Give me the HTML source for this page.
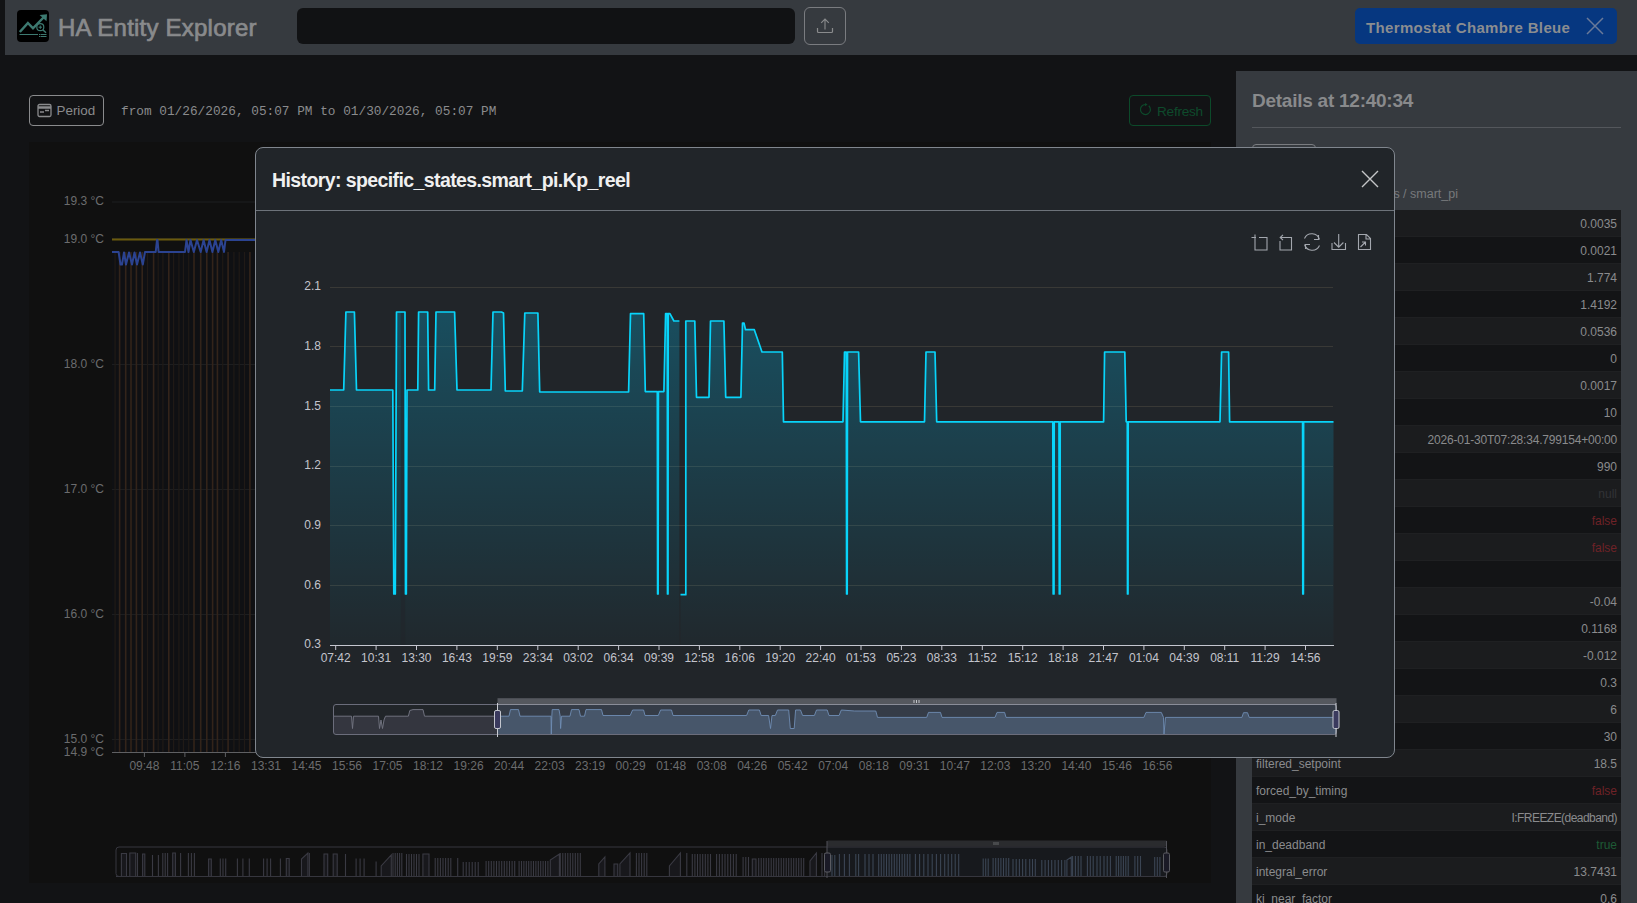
<!DOCTYPE html>
<html><head><meta charset="utf-8"><title>HA Entity Explorer</title>
<style>
*{box-sizing:border-box;margin:0;padding:0}
html,body{width:1637px;height:903px;overflow:hidden}
body{background:#121315;font-family:"Liberation Sans",sans-serif;position:relative;color:#888}
.a{position:absolute}
.t{position:absolute;white-space:nowrap;line-height:1}
</style></head><body>

<div class="a" style="left:5px;top:0;width:1632px;height:55px;background:#363a3f"></div>
<div class="a" style="left:17px;top:10px;width:32px;height:32px;background:#000;border-radius:4px"></div>
<svg class="a" style="left:17px;top:10px" width="32" height="32" viewBox="0 0 32 32">
<path d="M2.8 22 L10.9 13 L16 18.3 L26.5 7.5" stroke="#3d7a71" stroke-width="2.5" fill="none" stroke-linejoin="miter"/>
<path d="M22.6 5 L30 4.2 L29.5 11.2 Z" fill="#3d7a71"/>
<circle cx="23.3" cy="17.2" r="3.5" stroke="#3d7a71" stroke-width="1.2" fill="#000"/>
<path d="M21.6 17.2h3.4M23.3 15.5v3.4" stroke="#3d7a71" stroke-width="1"/>
<path d="M25.8 19.8 L29 22.8" stroke="#3d7a71" stroke-width="1.5"/>
<path d="M2.5 24.5h18.5M23.5 24.5h6M23.5 26.5h6" stroke="#3d7a71" stroke-width="1"/>
<path d="M22 24.5h1M22 26.5h1" stroke="#3d7a71" stroke-width="1"/>
</svg>
<div class="t" style="left:58px;top:16px;font-size:24px;letter-spacing:0.22px;-webkit-text-stroke:0.7px #898a8c;color:#898a8c">HA Entity Explorer</div>
<div class="a" style="left:297px;top:8px;width:498px;height:36px;background:#111214;border-radius:6px"></div>
<div class="a" style="left:804px;top:7px;width:42px;height:38px;border:1px solid #7a7c80;border-radius:6px"></div>
<svg class="a" style="left:804px;top:7px" width="42" height="38" viewBox="0 0 42 38">
<path d="M21 12v10.5M17.2 15.8l3.8-3.8 3.8 3.8" stroke="#8a8b8d" stroke-width="1.1" fill="none"/>
<path d="M13.5 21v3.5a1 1 0 0 0 1 1h13a1 1 0 0 0 1-1V21" stroke="#8a8b8d" stroke-width="1.2" fill="none"/>
</svg>
<div class="a" style="left:1355px;top:8px;width:262px;height:36px;background:#063780;border-radius:5px"></div>
<div class="t" style="left:1366px;top:20px;font-size:15px;font-weight:bold;letter-spacing:0.35px;color:#8b8d90">Thermostat Chambre Bleue</div>
<svg class="a" style="left:1585px;top:16px" width="20" height="20" viewBox="0 0 20 20"><path d="M2 2L18 18M18 2L2 18" stroke="#6a7a99" stroke-width="1.5"/></svg>
<div class="a" style="left:29px;top:95px;width:75px;height:31px;border:1px solid #8a8b8d;border-radius:4px"></div>
<svg class="a" style="left:37px;top:103px" width="15" height="15" viewBox="0 0 15 15">
<rect x="1" y="1.5" width="13" height="12" rx="1.5" fill="none" stroke="#8a8b8d" stroke-width="1.3"/>
<path d="M1 4.5h13" stroke="#8a8b8d" stroke-width="2.5"/><path d="M3 9h4M8 7.5h4" stroke="#8a8b8d" stroke-width="1.3"/></svg>
<div class="t" style="left:56.5px;top:104px;font-size:13.4px;color:#8a8b8d">Period</div>
<div class="t" style="left:121px;top:105.5px;font-family:'Liberation Mono',monospace;font-size:12.78px;color:#8a8b8d">from 01/26/2026, 05:07 PM to 01/30/2026, 05:07 PM</div>
<div class="a" style="left:1129px;top:95px;width:82px;height:31px;border:1px solid #0c4a2a;border-radius:4px"></div>
<svg class="a" style="left:1139px;top:103px" width="13" height="13" viewBox="0 0 13 13"><path d="M9.8 2.8A5 5 0 1 1 6.5 1.5" fill="none" stroke="#0d4a2b" stroke-width="1.2"/><path d="M6 0l2.6 1.6L6 3.3z" fill="#0d4a2b"/></svg>
<div class="t" style="left:1157px;top:105px;font-size:13.6px;letter-spacing:-0.25px;color:#0e4a2c">Refresh</div>
<div class="a" style="left:29px;top:142px;width:1182px;height:741px;background:#101010"></div>
<div class="a" style="left:1236px;top:71px;width:401px;height:832px;background:#363a3f"></div>
<div class="t" style="left:1252px;top:91px;font-size:19px;letter-spacing:-0.25px;font-weight:bold;color:#898a8c">Details at 12:40:34</div>
<div class="a" style="left:1252px;top:127px;width:369px;height:1px;background:#54575c"></div>
<div class="a" style="left:1252px;top:144px;width:64px;height:30px;border:1px solid #7a7c80;border-radius:4px"></div>
<div class="t" style="right:179px;top:187.5px;font-size:12.5px;color:#77797c">specific_states / smart_pi</div>
<div class="a" style="left:1252px;top:210px;width:369px;height:27px;background:#1b1c1e;border-bottom:1px solid #1f2022"></div>
<div class="t" style="left:1256px;top:218px;font-size:12px;color:#8a8b8d">Kd</div>
<div class="t" style="right:20px;top:218px;font-size:12px;color:#8a8b8d">0.0035</div>
<div class="a" style="left:1252px;top:237px;width:369px;height:27px;background:#131416;border-bottom:1px solid #1f2022"></div>
<div class="t" style="left:1256px;top:245px;font-size:12px;color:#8a8b8d">Ki</div>
<div class="t" style="right:20px;top:245px;font-size:12px;color:#8a8b8d">0.0021</div>
<div class="a" style="left:1252px;top:264px;width:369px;height:27px;background:#1b1c1e;border-bottom:1px solid #1f2022"></div>
<div class="t" style="left:1256px;top:272px;font-size:12px;color:#8a8b8d">Kp</div>
<div class="t" style="right:20px;top:272px;font-size:12px;color:#8a8b8d">1.774</div>
<div class="a" style="left:1252px;top:291px;width:369px;height:27px;background:#131416;border-bottom:1px solid #1f2022"></div>
<div class="t" style="left:1256px;top:299px;font-size:12px;color:#8a8b8d">Kp_reel</div>
<div class="t" style="right:20px;top:299px;font-size:12px;color:#8a8b8d">1.4192</div>
<div class="a" style="left:1252px;top:318px;width:369px;height:27px;background:#1b1c1e;border-bottom:1px solid #1f2022"></div>
<div class="t" style="left:1256px;top:326px;font-size:12px;color:#8a8b8d">u</div>
<div class="t" style="right:20px;top:326px;font-size:12px;color:#8a8b8d">0.0536</div>
<div class="a" style="left:1252px;top:345px;width:369px;height:27px;background:#131416;border-bottom:1px solid #1f2022"></div>
<div class="t" style="left:1256px;top:353px;font-size:12px;color:#8a8b8d">x</div>
<div class="t" style="right:20px;top:353px;font-size:12px;color:#8a8b8d">0</div>
<div class="a" style="left:1252px;top:372px;width:369px;height:27px;background:#1b1c1e;border-bottom:1px solid #1f2022"></div>
<div class="t" style="left:1256px;top:380px;font-size:12px;color:#8a8b8d">y</div>
<div class="t" style="right:20px;top:380px;font-size:12px;color:#8a8b8d">0.0017</div>
<div class="a" style="left:1252px;top:399px;width:369px;height:27px;background:#131416;border-bottom:1px solid #1f2022"></div>
<div class="t" style="left:1256px;top:407px;font-size:12px;color:#8a8b8d">z</div>
<div class="t" style="right:20px;top:407px;font-size:12px;color:#8a8b8d">10</div>
<div class="a" style="left:1252px;top:426px;width:369px;height:27px;background:#1b1c1e;border-bottom:1px solid #1f2022"></div>
<div class="t" style="left:1256px;top:434px;font-size:12px;color:#8a8b8d">timestamp</div>
<div class="t" style="right:20px;top:434px;font-size:12px;letter-spacing:-0.2px;color:#8a8b8d">2026-01-30T07:28:34.799154+00:00</div>
<div class="a" style="left:1252px;top:453px;width:369px;height:27px;background:#131416;border-bottom:1px solid #1f2022"></div>
<div class="t" style="left:1256px;top:461px;font-size:12px;color:#8a8b8d">count</div>
<div class="t" style="right:20px;top:461px;font-size:12px;color:#8a8b8d">990</div>
<div class="a" style="left:1252px;top:480px;width:369px;height:27px;background:#1b1c1e;border-bottom:1px solid #1f2022"></div>
<div class="t" style="left:1256px;top:488px;font-size:12px;color:#8a8b8d">a</div>
<div class="t" style="right:20px;top:488px;font-size:12px;color:#323336">null</div>
<div class="a" style="left:1252px;top:507px;width:369px;height:27px;background:#131416;border-bottom:1px solid #1f2022"></div>
<div class="t" style="left:1256px;top:515px;font-size:12px;color:#8a8b8d">b</div>
<div class="t" style="right:20px;top:515px;font-size:12px;color:#6e2227">false</div>
<div class="a" style="left:1252px;top:534px;width:369px;height:27px;background:#1b1c1e;border-bottom:1px solid #1f2022"></div>
<div class="t" style="left:1256px;top:542px;font-size:12px;color:#8a8b8d">c</div>
<div class="t" style="right:20px;top:542px;font-size:12px;color:#6e2227">false</div>
<div class="a" style="left:1252px;top:561px;width:369px;height:27px;background:#131416;border-bottom:1px solid #1f2022"></div>
<div class="t" style="left:1256px;top:569px;font-size:12px;color:#8a8b8d">d</div>
<div class="t" style="right:20px;top:569px;font-size:12px;color:#8a8b8d"></div>
<div class="a" style="left:1252px;top:588px;width:369px;height:27px;background:#1b1c1e;border-bottom:1px solid #1f2022"></div>
<div class="t" style="left:1256px;top:596px;font-size:12px;color:#8a8b8d">e</div>
<div class="t" style="right:20px;top:596px;font-size:12px;color:#8a8b8d">-0.04</div>
<div class="a" style="left:1252px;top:615px;width:369px;height:27px;background:#131416;border-bottom:1px solid #1f2022"></div>
<div class="t" style="left:1256px;top:623px;font-size:12px;color:#8a8b8d">f</div>
<div class="t" style="right:20px;top:623px;font-size:12px;color:#8a8b8d">0.1168</div>
<div class="a" style="left:1252px;top:642px;width:369px;height:27px;background:#1b1c1e;border-bottom:1px solid #1f2022"></div>
<div class="t" style="left:1256px;top:650px;font-size:12px;color:#8a8b8d">g</div>
<div class="t" style="right:20px;top:650px;font-size:12px;color:#8a8b8d">-0.012</div>
<div class="a" style="left:1252px;top:669px;width:369px;height:27px;background:#131416;border-bottom:1px solid #1f2022"></div>
<div class="t" style="left:1256px;top:677px;font-size:12px;color:#8a8b8d">h</div>
<div class="t" style="right:20px;top:677px;font-size:12px;color:#8a8b8d">0.3</div>
<div class="a" style="left:1252px;top:696px;width:369px;height:27px;background:#1b1c1e;border-bottom:1px solid #1f2022"></div>
<div class="t" style="left:1256px;top:704px;font-size:12px;color:#8a8b8d">i</div>
<div class="t" style="right:20px;top:704px;font-size:12px;color:#8a8b8d">6</div>
<div class="a" style="left:1252px;top:723px;width:369px;height:27px;background:#131416;border-bottom:1px solid #1f2022"></div>
<div class="t" style="left:1256px;top:731px;font-size:12px;color:#8a8b8d">j</div>
<div class="t" style="right:20px;top:731px;font-size:12px;color:#8a8b8d">30</div>
<div class="a" style="left:1252px;top:750px;width:369px;height:27px;background:#1b1c1e;border-bottom:1px solid #1f2022"></div>
<div class="t" style="left:1256px;top:758px;font-size:12px;color:#8a8b8d">filtered_setpoint</div>
<div class="t" style="right:20px;top:758px;font-size:12px;color:#8a8b8d">18.5</div>
<div class="a" style="left:1252px;top:777px;width:369px;height:27px;background:#131416;border-bottom:1px solid #1f2022"></div>
<div class="t" style="left:1256px;top:785px;font-size:12px;color:#8a8b8d">forced_by_timing</div>
<div class="t" style="right:20px;top:785px;font-size:12px;color:#6e2227">false</div>
<div class="a" style="left:1252px;top:804px;width:369px;height:27px;background:#1b1c1e;border-bottom:1px solid #1f2022"></div>
<div class="t" style="left:1256px;top:812px;font-size:12px;color:#8a8b8d">i_mode</div>
<div class="t" style="right:20px;top:812px;font-size:12px;letter-spacing:-0.55px;color:#8a8b8d">I:FREEZE(deadband)</div>
<div class="a" style="left:1252px;top:831px;width:369px;height:27px;background:#131416;border-bottom:1px solid #1f2022"></div>
<div class="t" style="left:1256px;top:839px;font-size:12px;color:#8a8b8d">in_deadband</div>
<div class="t" style="right:20px;top:839px;font-size:12px;color:#1d5a35">true</div>
<div class="a" style="left:1252px;top:858px;width:369px;height:27px;background:#1b1c1e;border-bottom:1px solid #1f2022"></div>
<div class="t" style="left:1256px;top:866px;font-size:12px;color:#8a8b8d">integral_error</div>
<div class="t" style="right:20px;top:866px;font-size:12px;color:#8a8b8d">13.7431</div>
<div class="a" style="left:1252px;top:885px;width:369px;height:27px;background:#131416;border-bottom:1px solid #1f2022"></div>
<div class="t" style="left:1256px;top:893px;font-size:12px;color:#8a8b8d">ki_near_factor</div>
<div class="t" style="right:20px;top:893px;font-size:12px;color:#8a8b8d">0.6</div>
<div class="t" style="right:1533px;top:194.8px;font-size:12px;color:#6b6c6e">19.3 °C</div>
<div class="t" style="right:1533px;top:232.5px;font-size:12px;color:#6b6c6e">19.0 °C</div>
<div class="t" style="right:1533px;top:357.7px;font-size:12px;color:#6b6c6e">18.0 °C</div>
<div class="t" style="right:1533px;top:482.7px;font-size:12px;color:#6b6c6e">17.0 °C</div>
<div class="t" style="right:1533px;top:607.7px;font-size:12px;color:#6b6c6e">16.0 °C</div>
<div class="t" style="right:1533px;top:732.7px;font-size:12px;color:#6b6c6e">15.0 °C</div>
<div class="t" style="right:1533px;top:745.5px;font-size:12px;color:#6b6c6e">14.9 °C</div>
<svg class="a" style="left:0;top:0" width="1637" height="903" viewBox="0 0 1637 903" font-family="Liberation Sans, sans-serif"><rect x="112" y="252" width="1058" height="500" fill="#0f1013"/>
<path d="M112 202H1170" stroke="#1d1e20" stroke-width="1"/>
<path d="M112 238.5H1170" stroke="#1d1e20" stroke-width="1"/>
<path d="M112 364.5H1170" stroke="#1d1e20" stroke-width="1"/>
<path d="M112 489.5H1170" stroke="#1d1e20" stroke-width="1"/>
<path d="M112 614.5H1170" stroke="#1d1e20" stroke-width="1"/>
<path d="M112 739.5H1170" stroke="#1d1e20" stroke-width="1"/>
<path d="M115.1 252V752" stroke="#201a16" stroke-width="1.2"/>
<path d="M147.5 252V752" stroke="#201a16" stroke-width="1.2"/>
<path d="M158.2 252V752" stroke="#201a16" stroke-width="1.2"/>
<path d="M162.9 252V752" stroke="#201a16" stroke-width="1.2"/>
<path d="M173.6 252V752" stroke="#201a16" stroke-width="1.2"/>
<path d="M178.9 252V752" stroke="#201a16" stroke-width="1.2"/>
<path d="M183.4 252V752" stroke="#201a16" stroke-width="1.2"/>
<path d="M188.7 252V752" stroke="#201a16" stroke-width="1.2"/>
<path d="M222.7 252V752" stroke="#201a16" stroke-width="1.2"/>
<path d="M233.9 252V752" stroke="#201a16" stroke-width="1.2"/>
<path d="M239.2 252V752" stroke="#201a16" stroke-width="1.2"/>
<path d="M244.5 252V752" stroke="#201a16" stroke-width="1.2"/>
<path d="M119.6 252V752" stroke="#33241a" stroke-width="1.6"/>
<path d="M125.7 252V752" stroke="#33241a" stroke-width="1.6"/>
<path d="M131 252V752" stroke="#33241a" stroke-width="1.6"/>
<path d="M136.4 252V752" stroke="#33241a" stroke-width="1.6"/>
<path d="M142.2 252V752" stroke="#33241a" stroke-width="1.6"/>
<path d="M153.6 252V752" stroke="#33241a" stroke-width="1.6"/>
<path d="M168.8 252V752" stroke="#33241a" stroke-width="1.6"/>
<path d="M194 252V752" stroke="#33241a" stroke-width="1.6"/>
<path d="M200.7 252V752" stroke="#33241a" stroke-width="1.6"/>
<path d="M206.8 252V752" stroke="#33241a" stroke-width="1.6"/>
<path d="M212.6 252V752" stroke="#33241a" stroke-width="1.6"/>
<path d="M217.4 252V752" stroke="#33241a" stroke-width="1.6"/>
<path d="M228.1 252V752" stroke="#33241a" stroke-width="1.6"/>
<path d="M249.9 252V752" stroke="#33241a" stroke-width="1.6"/>
<path d="M112 239.5H1170" stroke="#6b5a0d" stroke-width="2"/>
<path d="M112 252 L118.6 252 L120.5 264.5 L122 264.5 L124 252.5 L126 264.5 L129 252.5 L132 264.5 L134.5 252.5 L137 264.5 L140 252.5 L142.8 264.5 L145 252 L155.7 252 L157 240 L157.5 240 L158.6 252 L185 252 L186.5 240 L188.5 252 L190.5 240 L193.8 252 L197 240 L200.7 252 L203.6 240 L206.6 252 L209.5 240 L212.4 252 L215.3 240 L218.3 252 L221.2 240 L224 252 L225.5 240 L1170 240" stroke="#2b4391" stroke-width="2" fill="none" stroke-linejoin="round"/>
<path d="M112 752.5H1170" stroke="#5f6063" stroke-width="1"/>
<path d="M144.4 752V757" stroke="#5f6063" stroke-width="1"/>
<text x="144.4" y="770" text-anchor="middle" font-size="12" fill="#6b6c6e">09:48</text>
<path d="M184.9 752V757" stroke="#5f6063" stroke-width="1"/>
<text x="184.9" y="770" text-anchor="middle" font-size="12" fill="#6b6c6e">11:05</text>
<path d="M225.4 752V757" stroke="#5f6063" stroke-width="1"/>
<text x="225.4" y="770" text-anchor="middle" font-size="12" fill="#6b6c6e">12:16</text>
<path d="M266.0 752V757" stroke="#5f6063" stroke-width="1"/>
<text x="266.0" y="770" text-anchor="middle" font-size="12" fill="#6b6c6e">13:31</text>
<path d="M306.5 752V757" stroke="#5f6063" stroke-width="1"/>
<text x="306.5" y="770" text-anchor="middle" font-size="12" fill="#6b6c6e">14:45</text>
<path d="M347.0 752V757" stroke="#5f6063" stroke-width="1"/>
<text x="347.0" y="770" text-anchor="middle" font-size="12" fill="#6b6c6e">15:56</text>
<path d="M387.5 752V757" stroke="#5f6063" stroke-width="1"/>
<text x="387.5" y="770" text-anchor="middle" font-size="12" fill="#6b6c6e">17:05</text>
<path d="M428.0 752V757" stroke="#5f6063" stroke-width="1"/>
<text x="428.0" y="770" text-anchor="middle" font-size="12" fill="#6b6c6e">18:12</text>
<path d="M468.6 752V757" stroke="#5f6063" stroke-width="1"/>
<text x="468.6" y="770" text-anchor="middle" font-size="12" fill="#6b6c6e">19:26</text>
<path d="M509.1 752V757" stroke="#5f6063" stroke-width="1"/>
<text x="509.1" y="770" text-anchor="middle" font-size="12" fill="#6b6c6e">20:44</text>
<path d="M549.6 752V757" stroke="#5f6063" stroke-width="1"/>
<text x="549.6" y="770" text-anchor="middle" font-size="12" fill="#6b6c6e">22:03</text>
<path d="M590.1 752V757" stroke="#5f6063" stroke-width="1"/>
<text x="590.1" y="770" text-anchor="middle" font-size="12" fill="#6b6c6e">23:19</text>
<path d="M630.6 752V757" stroke="#5f6063" stroke-width="1"/>
<text x="630.6" y="770" text-anchor="middle" font-size="12" fill="#6b6c6e">00:29</text>
<path d="M671.2 752V757" stroke="#5f6063" stroke-width="1"/>
<text x="671.2" y="770" text-anchor="middle" font-size="12" fill="#6b6c6e">01:48</text>
<path d="M711.7 752V757" stroke="#5f6063" stroke-width="1"/>
<text x="711.7" y="770" text-anchor="middle" font-size="12" fill="#6b6c6e">03:08</text>
<path d="M752.2 752V757" stroke="#5f6063" stroke-width="1"/>
<text x="752.2" y="770" text-anchor="middle" font-size="12" fill="#6b6c6e">04:26</text>
<path d="M792.7 752V757" stroke="#5f6063" stroke-width="1"/>
<text x="792.7" y="770" text-anchor="middle" font-size="12" fill="#6b6c6e">05:42</text>
<path d="M833.2 752V757" stroke="#5f6063" stroke-width="1"/>
<text x="833.2" y="770" text-anchor="middle" font-size="12" fill="#6b6c6e">07:04</text>
<path d="M873.8 752V757" stroke="#5f6063" stroke-width="1"/>
<text x="873.8" y="770" text-anchor="middle" font-size="12" fill="#6b6c6e">08:18</text>
<path d="M914.3 752V757" stroke="#5f6063" stroke-width="1"/>
<text x="914.3" y="770" text-anchor="middle" font-size="12" fill="#6b6c6e">09:31</text>
<path d="M954.8 752V757" stroke="#5f6063" stroke-width="1"/>
<text x="954.8" y="770" text-anchor="middle" font-size="12" fill="#6b6c6e">10:47</text>
<path d="M995.3 752V757" stroke="#5f6063" stroke-width="1"/>
<text x="995.3" y="770" text-anchor="middle" font-size="12" fill="#6b6c6e">12:03</text>
<path d="M1035.8 752V757" stroke="#5f6063" stroke-width="1"/>
<text x="1035.8" y="770" text-anchor="middle" font-size="12" fill="#6b6c6e">13:20</text>
<path d="M1076.4 752V757" stroke="#5f6063" stroke-width="1"/>
<text x="1076.4" y="770" text-anchor="middle" font-size="12" fill="#6b6c6e">14:40</text>
<path d="M1116.9 752V757" stroke="#5f6063" stroke-width="1"/>
<text x="1116.9" y="770" text-anchor="middle" font-size="12" fill="#6b6c6e">15:46</text>
<path d="M1157.4 752V757" stroke="#5f6063" stroke-width="1"/>
<text x="1157.4" y="770" text-anchor="middle" font-size="12" fill="#6b6c6e">16:56</text>
<rect x="827" y="847" width="340" height="29.5" fill="#17191d"/>
<rect x="827" y="840.5" width="340" height="6" rx="1" fill="#2a2b2e"/>
<path d="M994 842v3M996 842v3M998 842v3" stroke="#77787c" stroke-width="0.8"/>
<rect x="121.4" y="853.5" width="5.1" height="22.5" fill="#18181c"/>
<rect x="129.8" y="853" width="5.9" height="23" fill="#18181c"/>
<rect x="142.6" y="854" width="2.2" height="22" fill="#18181c"/>
<rect x="172.7" y="853" width="2.7" height="23" fill="#18181c"/>
<rect x="208.6" y="859" width="2.7" height="17" fill="#18181c"/>
<rect x="286.3" y="858.5" width="2.9" height="17.5" fill="#18181c"/>
<path d="M301.5 876V859L307.9 853V876Z" fill="#18181c"/>
<rect x="324" y="854" width="3.7" height="22" fill="#18181c"/>
<rect x="333.2" y="854" width="4.0" height="22" fill="#18181c"/>
<path d="M381.2 876V866L391.3 855V876Z" fill="#18181c"/>
<rect x="422.9" y="854" width="6.1" height="22" fill="#18181c"/>
<path d="M550.3 876V860L559.4 854V876Z" fill="#18181c"/>
<path d="M598.8 876V864L604.9 857V876Z" fill="#18181c"/>
<rect x="614" y="864" width="3.7" height="12" fill="#18181c"/>
<path d="M619.9 876V864L630 853V876Z" fill="#18181c"/>
<path d="M669.4 876V866L680.4 853V876Z" fill="#18181c"/>
<rect x="752.3" y="859" width="3.7" height="17" fill="#18181c"/>
<path d="M810 876V861L816.4 853V876Z" fill="#18181c"/>
<path d="M1066.9 876V860L1071.3 857V876Z" fill="#18181c"/>
<path d="M121.4 876V853.5H126.5V876 M129.8 876V853H135.7V876 M137.5 876V853 M142.6 876V854H144.8V876 M152.5 876V855 M158.4 876V855 M162.8 876V853 M165.2 876V853 M167.6 876V853 M172.7 876V853H175.4V876 M180.6 876V853 M188.4 876V853 M191.4 876V853 M194.4 876V853 M208.6 876V859H211.3V876 M220.3 876V858.5 M223.0 876V858.5 M225.7 876V858.5 M237.4 876V858.5 M242.9 876V858.5 M249.3 876V858.5 M263.6 876V858.5 M267.1 876V858.5 M270.6 876V858.5 M280.4 876V858.5 M286.3 876V858.5H289.2V876 M301.5 876V859L307.9 853V876 M309.4 876V853 M324 876V854H327.7V876 M333.2 876V854H337.2V876 M345.5 876V854 M356.1 876V858.5 M360.1 876V858.5 M364.1 876V858.5 M376.1 876V861.5 M381.2 876V866L391.3 855V876 M393.0 876V853 M395.2 876V853 M397.4 876V853 M399.6 876V853 M401.8 876V853 M406.5 876V854 M409.0 876V854 M411.5 876V854 M414.0 876V854 M416.5 876V854 M419.0 876V854 M422.9 876V854H429V876 M435.2 876V858 M437.8 876V858 M440.4 876V858 M443.0 876V858 M445.6 876V858 M448.2 876V858 M450.8 876V858 M457.7 876V858 M463.2 876V862 M466.2 876V862 M469.2 876V862 M472.2 876V862 M475.2 876V862 M478.2 876V862 M486.1 876V861 M488.7 876V861 M491.3 876V861 M493.9 876V861 M496.5 876V861 M499.1 876V861 M501.7 876V861 M504.3 876V861 M506.9 876V861 M509.5 876V861 M512.1 876V861 M514.7 876V861 M519.1 876V861 M521.5 876V861 M523.9 876V861 M526.3 876V861 M528.7 876V861 M531.1 876V861 M533.5 876V861 M535.9 876V861 M538.3 876V861 M540.7 876V861 M543.1 876V861 M545.5 876V861 M547.9 876V861 M550.3 876V860L559.4 854V876 M560.3 876V853 M562.8 876V853 M565.3 876V853 M567.8 876V853 M570.3 876V853 M572.8 876V853 M575.3 876V853 M577.8 876V853 M580.3 876V853 M598.8 876V864L604.9 857V876 M614 876V864H617.7V876 M619.9 876V864L630 853V876 M636.4 876V853 M639.0 876V853 M641.6 876V853 M644.2 876V853 M646.8 876V853 M669.4 876V866L680.4 853V876 M686.8 876V853 M692.3 876V854 M694.9 876V854 M697.5 876V854 M700.1 876V854 M702.7 876V854 M705.3 876V854 M707.9 876V854 M710.5 876V854 M716.6 876V854 M719.4 876V854 M722.2 876V854 M725.0 876V854 M727.8 876V854 M730.6 876V854 M733.4 876V854 M736.2 876V854 M743.1 876V857 M745.8 876V857 M748.5 876V857 M752.3 876V859H756V876 M758.7 876V858 M761.2 876V858 M763.7 876V858 M766.2 876V858 M768.7 876V858 M771.2 876V858 M773.7 876V858 M776.2 876V858 M778.7 876V858 M781.2 876V858 M783.7 876V858 M786.2 876V858 M788.7 876V858 M791.2 876V858 M793.7 876V858 M796.2 876V858 M798.7 876V858 M801.2 876V858 M803.7 876V858 M810 876V861L816.4 853V876 M822.0 876V853 M824.7 876V853" stroke="#3a3a43" stroke-width="1.1" fill="none"/>
<path d="M832.0 876V855 M834.8 876V855 M839.4 876V854 M844.4 876V854 M849.4 876V854 M855.8 876V854 M858.6 876V854 M865.0 876V854 M869.0 876V854 M873.0 876V854 M878.7 876V854 M881.3 876V854 M883.9 876V854 M886.5 876V854 M889.1 876V854 M891.7 876V854 M894.3 876V854 M896.9 876V854 M899.5 876V854 M902.1 876V854 M904.7 876V854 M907.3 876V854 M909.9 876V854 M915.4 876V854 M919.6 876V854 M923.8 876V854 M928.0 876V854 M932.2 876V854 M936.4 876V854 M940.6 876V854 M944.7 876V854 M948.2 876V854 M951.7 876V854 M955.2 876V854 M958.7 876V854 M983.2 876V858.5 M985.7 876V858.5 M988.2 876V858.5 M993.1 876V858 M995.7 876V858 M998.3 876V858 M1000.9 876V858 M1003.5 876V858 M1006.1 876V858 M1008.7 876V858 M1013.0 876V859 M1016.2 876V859 M1019.4 876V859 M1022.6 876V859 M1025.8 876V859 M1029.7 876V859 M1032.5 876V859 M1035.3 876V859 M1041.8 876V860 M1045.1 876V860 M1048.4 876V860 M1051.7 876V860 M1055.0 876V860 M1058.3 876V860 M1061.6 876V860 M1064.9 876V860 M1066.9 876V860L1071.3 857V876 M1072.6 876V856 M1075.4 876V856 M1078.2 876V856 M1081.0 876V856 M1087.4 876V856 M1090.3 876V856 M1093.2 876V856 M1097.0 876V856 M1100.2 876V856 M1104.0 876V856 M1107.2 876V856 M1110.4 876V856 M1116.2 876V856 M1118.6 876V856 M1121.0 876V856 M1123.4 876V856 M1125.8 876V856 M1128.2 876V856 M1134.9 876V856 M1137.7 876V856 M1140.5 876V856 M1154.7 876V857 M1157.3 876V857 M1159.9 876V857" stroke="#3b4554" stroke-width="1.1" fill="none"/>
<path d="M116 876.5H1167" stroke="#3a3a43" stroke-width="1"/>
<rect x="116" y="847" width="1051" height="29.5" rx="3" fill="none" stroke="#36363e" stroke-width="1"/>
<path d="M827 841V878M1166.5 841V878" stroke="#505158" stroke-width="1"/>
<rect x="824.5" y="853" width="6" height="19" rx="1.5" fill="#1a1a26" stroke="#5a5b61"/>
<rect x="1163.5" y="853" width="6" height="19" rx="1.5" fill="#1a1a26" stroke="#5a5b61"/></svg>
<div class="a" style="left:255px;top:147px;width:1140px;height:611px;background:#212529;border:1px solid #80868e;border-radius:8px"></div>
<div class="t" style="left:272px;top:171px;font-size:19.5px;letter-spacing:-0.6px;font-weight:bold;color:#f0f0f0">History: specific_states.smart_pi.Kp_reel</div>
<div class="a" style="left:256px;top:210px;width:1138px;height:1px;background:#6d737a"></div>
<svg class="a" style="left:0;top:0" width="1637" height="903" viewBox="0 0 1637 903" font-family="Liberation Sans, sans-serif"><path d="M1362 171L1378 187M1378 171L1362 187" stroke="#c4c5c7" stroke-width="1.4"/>
<g stroke="#a3a7ae" stroke-width="1.1" fill="none"><path d="M1251.5 237.5h4.5M1255 234.5v15.5h12V237.5h-8"/><path d="M1280 241v9h11.5V237.5h-11M1283 234.8l-2.8 2.7 2.8 2.7"/><path d="M1319.5 239.5a8 8 0 0 0-15-1M1304.5 244.5a8 8 0 0 0 15 1M1318.5 235v4.5h-4.5M1305.5 249v-4.5h4.5"/><path d="M1338.7 234v13M1334 242.5l4.7 4.7 4.7-4.7M1332 243v6.5h13.5V243"/><path d="M1358.5 234.5h8l4 4v11h-12z M1366 234.5v4.5h4.5 M1360.5 247l5-5M1362 242h3.5v3.5"/></g>
<path d="M330 287.5H1333" stroke="#393936" stroke-width="1"/>
<path d="M330 346.5H1333" stroke="#393936" stroke-width="1"/>
<path d="M330 406.5H1333" stroke="#393936" stroke-width="1"/>
<path d="M330 466.5H1333" stroke="#393936" stroke-width="1"/>
<path d="M330 525.5H1333" stroke="#393936" stroke-width="1"/>
<path d="M330 585.5H1333" stroke="#393936" stroke-width="1"/>
<text x="321" y="290.3" text-anchor="end" font-size="12" fill="#c3c4cc">2.1</text>
<text x="321" y="350.0" text-anchor="end" font-size="12" fill="#c3c4cc">1.8</text>
<text x="321" y="409.7" text-anchor="end" font-size="12" fill="#c3c4cc">1.5</text>
<text x="321" y="469.40000000000003" text-anchor="end" font-size="12" fill="#c3c4cc">1.2</text>
<text x="321" y="529.0999999999999" text-anchor="end" font-size="12" fill="#c3c4cc">0.9</text>
<text x="321" y="588.8" text-anchor="end" font-size="12" fill="#c3c4cc">0.6</text>
<text x="321" y="647.8" text-anchor="end" font-size="12" fill="#c3c4cc">0.3</text>
<defs><linearGradient id="ag" x1="0" y1="0" x2="0" y2="1"><stop offset="0" stop-color="#00c8ff" stop-opacity="0.25"/><stop offset="1" stop-color="#00c8ff" stop-opacity="0.02"/></linearGradient></defs>
<path d="M330 390 L343.7 390 L345.9 312 L354.4 312 L356.5 390 L392.8 390 L393.8 594 L395.3 594 L396.5 312 L405 312 L405.5 594 L406.3 594 L407 390 L417.8 390 L418.6 312 L427.7 312 L428.6 390 L434.7 390 L436 312 L454.6 312 L457 390 L491 390 L493 312 L501.4 312 L503.5 313 L505.3 391 L522.3 391 L524.8 313 L527 313 L537.9 313 L539.7 392 L628.6 392 L630.5 313.7 L643.7 313.7 L645.3 391.6 L657.3 391.6 L657.6 594 L658.1 594 L658.4 391.6 L663.9 391.6 L665.6 313.7 L667.3 313.7 L667.5 594 L668 594 L668.2 313.7 L669.9 313.7 L673.9 321 L679.4 321 L679.4 645 L330 645Z" fill="url(#ag)"/>
<path d="M680.5 594.7 L685.8 594.7 L685.8 321 L694.8 321 L696.5 397.3 L709 397.3 L710.5 321 L723.9 321 L725.7 397.3 L740.9 397.3 L742.5 323 L744 323 L745.5 329.7 L754.3 329.7 L762 352 L782.3 352 L783.5 421.8 L843 421.8 L844.5 352 L846.3 352 L846.6 594 L847.2 594 L847.5 352 L858.6 352 L860.5 421.8 L924.5 421.8 L926 352 L935 352 L936.7 421.8 L1052.8 421.8 L1053.2 594 L1054 594 L1054.2 421.8 L1059 421.8 L1059.3 594 L1060 594 L1060.2 421.8 L1103.6 421.8 L1104.6 352 L1124.8 352 L1126.2 421.8 L1127.3 421.8 L1127.5 594 L1128 594 L1128.2 421.8 L1220 421.8 L1221.6 352 L1228.6 352 L1229.6 421.8 L1302.6 421.8 L1302.8 594 L1303.4 594 L1303.6 421.8 L1333.5 421.8 L1333.5 645 L680.5 645Z" fill="url(#ag)"/>
<rect x="400.8" y="313" width="4.4" height="332" fill="#212529" opacity="0.55"/>
<path d="M330 390 L343.7 390 L345.9 312 L354.4 312 L356.5 390 L392.8 390 L393.8 594 L395.3 594 L396.5 312 L405 312 L405.5 594 L406.3 594 L407 390 L417.8 390 L418.6 312 L427.7 312 L428.6 390 L434.7 390 L436 312 L454.6 312 L457 390 L491 390 L493 312 L501.4 312 L503.5 313 L505.3 391 L522.3 391 L524.8 313 L527 313 L537.9 313 L539.7 392 L628.6 392 L630.5 313.7 L643.7 313.7 L645.3 391.6 L657.3 391.6 L657.6 594 L658.1 594 L658.4 391.6 L663.9 391.6 L665.6 313.7 L667.3 313.7 L667.5 594 L668 594 L668.2 313.7 L669.9 313.7 L673.9 321 L679.4 321" stroke="#08d4fa" stroke-width="1.7" fill="none" stroke-linejoin="round"/>
<path d="M680.5 594.7 L685.8 594.7 L685.8 321 L694.8 321 L696.5 397.3 L709 397.3 L710.5 321 L723.9 321 L725.7 397.3 L740.9 397.3 L742.5 323 L744 323 L745.5 329.7 L754.3 329.7 L762 352 L782.3 352 L783.5 421.8 L843 421.8 L844.5 352 L846.3 352 L846.6 594 L847.2 594 L847.5 352 L858.6 352 L860.5 421.8 L924.5 421.8 L926 352 L935 352 L936.7 421.8 L1052.8 421.8 L1053.2 594 L1054 594 L1054.2 421.8 L1059 421.8 L1059.3 594 L1060 594 L1060.2 421.8 L1103.6 421.8 L1104.6 352 L1124.8 352 L1126.2 421.8 L1127.3 421.8 L1127.5 594 L1128 594 L1128.2 421.8 L1220 421.8 L1221.6 352 L1228.6 352 L1229.6 421.8 L1302.6 421.8 L1302.8 594 L1303.4 594 L1303.6 421.8 L1333.5 421.8" stroke="#08d4fa" stroke-width="1.7" fill="none" stroke-linejoin="round"/>
<path d="M330 645.5H1334" stroke="#c5c7d0" stroke-width="1.2"/>
<path d="M335.7 645V650" stroke="#c5c7d0" stroke-width="1"/>
<text x="335.7" y="662" text-anchor="middle" font-size="12" fill="#c3c4cc">07:42</text>
<path d="M376.1 645V650" stroke="#c5c7d0" stroke-width="1"/>
<text x="376.1" y="662" text-anchor="middle" font-size="12" fill="#c3c4cc">10:31</text>
<path d="M416.5 645V650" stroke="#c5c7d0" stroke-width="1"/>
<text x="416.5" y="662" text-anchor="middle" font-size="12" fill="#c3c4cc">13:30</text>
<path d="M456.9 645V650" stroke="#c5c7d0" stroke-width="1"/>
<text x="456.9" y="662" text-anchor="middle" font-size="12" fill="#c3c4cc">16:43</text>
<path d="M497.3 645V650" stroke="#c5c7d0" stroke-width="1"/>
<text x="497.3" y="662" text-anchor="middle" font-size="12" fill="#c3c4cc">19:59</text>
<path d="M537.8 645V650" stroke="#c5c7d0" stroke-width="1"/>
<text x="537.8" y="662" text-anchor="middle" font-size="12" fill="#c3c4cc">23:34</text>
<path d="M578.2 645V650" stroke="#c5c7d0" stroke-width="1"/>
<text x="578.2" y="662" text-anchor="middle" font-size="12" fill="#c3c4cc">03:02</text>
<path d="M618.6 645V650" stroke="#c5c7d0" stroke-width="1"/>
<text x="618.6" y="662" text-anchor="middle" font-size="12" fill="#c3c4cc">06:34</text>
<path d="M659.0 645V650" stroke="#c5c7d0" stroke-width="1"/>
<text x="659.0" y="662" text-anchor="middle" font-size="12" fill="#c3c4cc">09:39</text>
<path d="M699.4 645V650" stroke="#c5c7d0" stroke-width="1"/>
<text x="699.4" y="662" text-anchor="middle" font-size="12" fill="#c3c4cc">12:58</text>
<path d="M739.8 645V650" stroke="#c5c7d0" stroke-width="1"/>
<text x="739.8" y="662" text-anchor="middle" font-size="12" fill="#c3c4cc">16:06</text>
<path d="M780.2 645V650" stroke="#c5c7d0" stroke-width="1"/>
<text x="780.2" y="662" text-anchor="middle" font-size="12" fill="#c3c4cc">19:20</text>
<path d="M820.6 645V650" stroke="#c5c7d0" stroke-width="1"/>
<text x="820.6" y="662" text-anchor="middle" font-size="12" fill="#c3c4cc">22:40</text>
<path d="M861.0 645V650" stroke="#c5c7d0" stroke-width="1"/>
<text x="861.0" y="662" text-anchor="middle" font-size="12" fill="#c3c4cc">01:53</text>
<path d="M901.4 645V650" stroke="#c5c7d0" stroke-width="1"/>
<text x="901.4" y="662" text-anchor="middle" font-size="12" fill="#c3c4cc">05:23</text>
<path d="M941.8 645V650" stroke="#c5c7d0" stroke-width="1"/>
<text x="941.8" y="662" text-anchor="middle" font-size="12" fill="#c3c4cc">08:33</text>
<path d="M982.3 645V650" stroke="#c5c7d0" stroke-width="1"/>
<text x="982.3" y="662" text-anchor="middle" font-size="12" fill="#c3c4cc">11:52</text>
<path d="M1022.7 645V650" stroke="#c5c7d0" stroke-width="1"/>
<text x="1022.7" y="662" text-anchor="middle" font-size="12" fill="#c3c4cc">15:12</text>
<path d="M1063.1 645V650" stroke="#c5c7d0" stroke-width="1"/>
<text x="1063.1" y="662" text-anchor="middle" font-size="12" fill="#c3c4cc">18:18</text>
<path d="M1103.5 645V650" stroke="#c5c7d0" stroke-width="1"/>
<text x="1103.5" y="662" text-anchor="middle" font-size="12" fill="#c3c4cc">21:47</text>
<path d="M1143.9 645V650" stroke="#c5c7d0" stroke-width="1"/>
<text x="1143.9" y="662" text-anchor="middle" font-size="12" fill="#c3c4cc">01:04</text>
<path d="M1184.3 645V650" stroke="#c5c7d0" stroke-width="1"/>
<text x="1184.3" y="662" text-anchor="middle" font-size="12" fill="#c3c4cc">04:39</text>
<path d="M1224.7 645V650" stroke="#c5c7d0" stroke-width="1"/>
<text x="1224.7" y="662" text-anchor="middle" font-size="12" fill="#c3c4cc">08:11</text>
<path d="M1265.1 645V650" stroke="#c5c7d0" stroke-width="1"/>
<text x="1265.1" y="662" text-anchor="middle" font-size="12" fill="#c3c4cc">11:29</text>
<path d="M1305.5 645V650" stroke="#c5c7d0" stroke-width="1"/>
<text x="1305.5" y="662" text-anchor="middle" font-size="12" fill="#c3c4cc">14:56</text>
<rect x="497.5" y="698.2" width="839" height="6" fill="#55585e"/>
<rect x="497.5" y="704.5" width="839" height="30" fill="#353c47"/>
<path d="M333.5 716.2 L351.5 716.2 L352.5 728.5 L353.5 716.2 L378.5 716.2 L379.5 728.5 L381 720 L382.5 728.5 L384 720 L385.5 716.2 L408.4 716.2 L409.8 710.5 L413 709.6 L423 709.6 L424.5 716.2 L497.5 716.2 L497.5 734 L333.5 734Z" fill="#34363f"/>
<path d="M497.5 716.2 L509 716.2 L510.5 709.6 L518.5 709.6 L520 716.2 L551 716.2 L551.3 734 L551.8 716.2 L552.2 709.6 L559 709.6 L560.2 716.2 L560.6 728.5 L561.5 716.2 L570 716.2 L571.5 709.6 L579 709.6 L580.5 716.2 L584.5 716.2 L586 709.6 L601.5 709.6 L603 715.5 L630.2 715.5 L632.6 710 L643.6 710 L645 715.5 L658.3 715.5 L660.6 710 L671.5 710 L673 715.5 L746.6 715.5 L748.8 710 L759.4 710 L761.2 715.5 L768.6 715.5 L770.5 728.5 L772 715.5 L775.3 715.5 L777.5 710 L788.7 710 L790.3 728.5 L794.2 728.5 L795.6 710 L800.5 710 L802.6 715.5 L814.4 715.5 L816.5 710 L827.2 710 L829 715.5 L839.1 715.5 L841.3 710 L854.7 711 L875.8 711 L877.5 717.4 L926.7 717.4 L928.5 712.4 L940.5 712.4 L942 717.4 L995 717.4 L997 712.4 L1004.6 712.4 L1006 717.4 L1143.9 717.4 L1146 712.4 L1161.3 712.4 L1163.5 717.4 L1164 734 L1165.5 717.4 L1241.9 717.4 L1243.5 712.7 L1247.5 712.7 L1249.2 717.4 L1336 717.4 L1336 734 L497.5 734Z" fill="#47566a"/>
<path d="M333.5 716.2 L351.5 716.2 L352.5 728.5 L353.5 716.2 L378.5 716.2 L379.5 728.5 L381 720 L382.5 728.5 L384 720 L385.5 716.2 L408.4 716.2 L409.8 710.5 L413 709.6 L423 709.6 L424.5 716.2 L497.5 716.2" stroke="#70727f" stroke-width="1" fill="none"/>
<path d="M497.5 716.2 L509 716.2 L510.5 709.6 L518.5 709.6 L520 716.2 L551 716.2 L551.3 734 L551.8 716.2 L552.2 709.6 L559 709.6 L560.2 716.2 L560.6 728.5 L561.5 716.2 L570 716.2 L571.5 709.6 L579 709.6 L580.5 716.2 L584.5 716.2 L586 709.6 L601.5 709.6 L603 715.5 L630.2 715.5 L632.6 710 L643.6 710 L645 715.5 L658.3 715.5 L660.6 710 L671.5 710 L673 715.5 L746.6 715.5 L748.8 710 L759.4 710 L761.2 715.5 L768.6 715.5 L770.5 728.5 L772 715.5 L775.3 715.5 L777.5 710 L788.7 710 L790.3 728.5 L794.2 728.5 L795.6 710 L800.5 710 L802.6 715.5 L814.4 715.5 L816.5 710 L827.2 710 L829 715.5 L839.1 715.5 L841.3 710 L854.7 711 L875.8 711 L877.5 717.4 L926.7 717.4 L928.5 712.4 L940.5 712.4 L942 717.4 L995 717.4 L997 712.4 L1004.6 712.4 L1006 717.4 L1143.9 717.4 L1146 712.4 L1161.3 712.4 L1163.5 717.4 L1164 734 L1165.5 717.4 L1241.9 717.4 L1243.5 712.7 L1247.5 712.7 L1249.2 717.4 L1336 717.4" stroke="#6f8db4" stroke-width="0.9" fill="none"/>
<rect x="333.5" y="704.5" width="1003" height="30" rx="2.5" fill="none" stroke="#6b6d7b" stroke-width="1"/>
<path d="M497.5 704.5H1336" stroke="#8a8d98" stroke-width="1"/>
<path d="M914 700v3M916.5 700v3M919 700v3" stroke="#d0d2d6" stroke-width="0.9"/>
<path d="M497.5 703V737M1336 703V737" stroke="#c9ccd2" stroke-width="1"/>
<rect x="494.5" y="710.5" width="6" height="18" rx="1.5" fill="#3a3a5e" stroke="#c3c6ce" stroke-width="1"/>
<rect x="1333" y="710.5" width="6" height="18" rx="1.5" fill="#3a3a5e" stroke="#c3c6ce" stroke-width="1"/></svg>
</body></html>
